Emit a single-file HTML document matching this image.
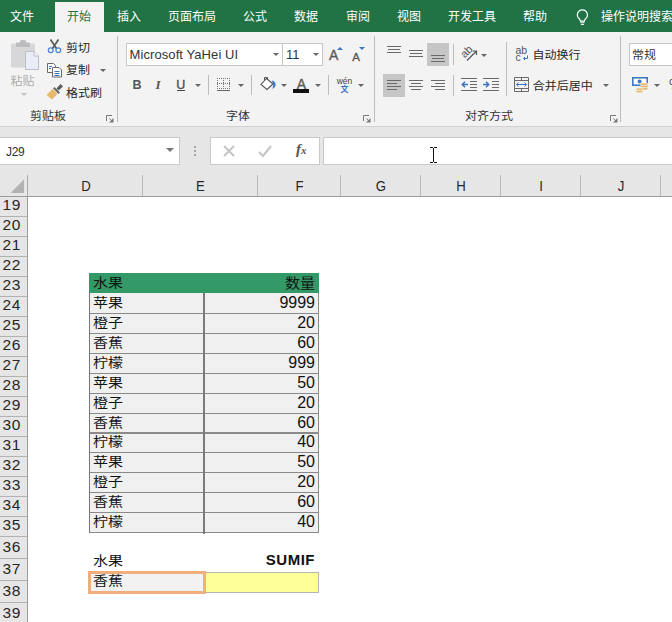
<!DOCTYPE html><html lang="zh-CN"><head><meta charset="utf-8"><title>Excel SUMIF</title><style>
*{margin:0;padding:0;box-sizing:border-box}
html,body{width:672px;height:622px;overflow:hidden;background:#fff}
body{position:relative;font-family:"Liberation Sans","Noto Sans CJK SC",sans-serif;color:#262626}
.a{position:absolute;white-space:nowrap}
.tab{position:absolute;top:0;height:34px;line-height:34px;font-size:12px;color:#fff;white-space:nowrap}
.rt{position:absolute;font-size:12px;line-height:16px;color:#262626;white-space:nowrap}
.gl{position:absolute;font-size:12px;line-height:16px;color:#444;white-space:nowrap}
.sep{position:absolute;width:1px;background:#c8c8c8}
.arr{position:absolute;width:0;height:0;border-left:3px solid transparent;border-right:3px solid transparent;border-top:3px solid #666}
.ch{position:absolute;top:176px;height:20px;line-height:20px;font-size:15px;text-align:center;color:#262626;transform:scaleX(.88)}
.chs{position:absolute;top:175px;height:21px;width:1px;background:#b8b8b8}
.rh{position:absolute;left:0;width:27px;height:20px;line-height:16.500px;font-size:15.500px;letter-spacing:0.600px;color:#262626;text-align:left;padding-left:2.500px;border-bottom:1px solid #b2b2b2}
.c1{position:absolute;left:89px;width:115px;height:20px;line-height:18px;font-size:15px;padding-left:4px;color:#111;white-space:nowrap;transform:translateY(.5px) scaleY(.87)}
.c2{position:absolute;left:205px;width:114px;height:20px;line-height:19px;font-size:16px;padding-right:4px;text-align:right;color:#111;white-space:nowrap}
</style></head><body>
<div class="a" style="left:0;top:0;width:672px;height:32px;background:#217346"></div>
<div class="a" style="left:55px;top:2px;width:49px;height:30px;background:#f3f3f3"></div>
<div class="tab" style="left:10px;color:#fff">文件</div>
<div class="tab" style="left:67px;color:#217346">开始</div>
<div class="tab" style="left:117px;color:#fff">插入</div>
<div class="tab" style="left:168px;color:#fff">页面布局</div>
<div class="tab" style="left:243px;color:#fff">公式</div>
<div class="tab" style="left:294px;color:#fff">数据</div>
<div class="tab" style="left:346px;color:#fff">审阅</div>
<div class="tab" style="left:397px;color:#fff">视图</div>
<div class="tab" style="left:448px;color:#fff">开发工具</div>
<div class="tab" style="left:523px;color:#fff">帮助</div>
<div class="tab" style="left:601px;color:#fff">操作说明搜索</div>
<svg class="a" style="left:575px;top:7px" width="16" height="20" viewBox="0 0 16 20"><path d="M7.400 2.800a5 5 0 0 0-3 9c.7.700 1 1.500 1 2.400h4c0-.9.300-1.700 1-2.400a5 5 0 0 0-3-9z" fill="none" stroke="#fff" stroke-width="1.200"/><path d="M5.400 15.800h4M5.900 17.500h3" stroke="#fff" stroke-width="1.100"/></svg>
<div class="a" style="left:0;top:32px;width:672px;height:94px;background:#f3f3f3"></div>
<div class="a" style="left:0;top:126px;width:672px;height:1px;background:#d2d2d2"></div>
<div class="a" style="left:0;top:127px;width:672px;height:69px;background:#e6e6e6"></div>
<svg class="a" style="left:10px;top:39px" width="30" height="32" viewBox="0 0 30 32"><rect x="1" y="4.500" width="24" height="24" rx="1.500" fill="#d7d7da"/><rect x="6" y="3.500" width="14" height="4.500" rx="0.800" fill="#bcbcbf"/><rect x="10" y="1" width="6" height="4" rx="1.500" fill="#bcbcbf"/><path d="M15.500 12.500h8.500l4.500 4.500v13.500h-13z" fill="#e9edf8" stroke="#bdbdc2"/><path d="M24 12.500v4.500h4.500" fill="#f6f7fb" stroke="#bdbdc2"/></svg>
<div class="rt" style="left:10.5px;top:72.5px;font-size:12px;color:#adadad;transform:scaleY(.9)">粘贴</div>
<div class="arr" style="left:21px;top:93px;border-top-color:#c2c2c2"></div>
<svg class="a" style="left:46px;top:38px" width="17" height="16" viewBox="0 0 17 16"><path d="M4.500 1.500l6 9M12.500 1.500l-6 9" stroke="#585858" stroke-width="1.700" fill="none"/><circle cx="4.700" cy="12.200" r="2.400" fill="none" stroke="#4a86c8" stroke-width="1.200"/><circle cx="12.300" cy="12.200" r="2.400" fill="none" stroke="#4a86c8" stroke-width="1.200"/></svg>
<div class="rt" style="left:66px;top:39.5px;font-size:12px;color:#262626;transform:scaleY(.9)">剪切</div>
<svg class="a" style="left:47px;top:62px" width="16" height="16" viewBox="0 0 16 16"><path d="M0.500 1.500h6l2 2v7h-8z" fill="#fff" stroke="#6a6a6a"/><path d="M5.500 5.500h6.500l2.500 2.500v7h-9z" fill="#fff" stroke="#6a6a6a"/><path d="M7.500 9.500h5M7.500 11.500h5M7.500 13.500h5" stroke="#3a75c4"/><path d="M2 4.500h3M2 6.500h2" stroke="#3a75c4"/></svg>
<div class="rt" style="left:66px;top:61.5px;font-size:12px;color:#262626;transform:scaleY(.9)">复制</div>
<div class="arr" style="left:99.5px;top:69px;border-top-color:#666"></div>
<svg class="a" style="left:46px;top:83px" width="18" height="17" viewBox="0 0 18 17"><path d="M10.500 5.500l4-4.500 2.500 2.500-4.500 4z" fill="#5a5a5a"/><path d="M8.500 4l5.500 5.500-1.500 1.500-5.500-5.500z" fill="#6a6a6a"/><path d="M6.500 6l5 5-5.500 5.500-5.500-4.500z" fill="#e8b96a"/></svg>
<div class="rt" style="left:66px;top:84.5px;font-size:12px;color:#262626;transform:scaleY(.9)">格式刷</div>
<div class="rt" style="left:30px;top:108px;font-size:12px;color:#333;transform:scaleY(.9)">剪贴板</div>
<svg class="a" style="left:106px;top:115px" width="8" height="8" viewBox="0 0 8 8"><path d="M0.500 6V0.500H6" stroke="#777" fill="none"/><path d="M7.500 3v4.500H3z" fill="#777"/><path d="M3.500 3.500l3 3" stroke="#777" fill="none"/></svg>
<div class="sep" style="left:117px;top:36px;height:86px;background:#bcbcbc"></div>
<div class="a" style="left:126px;top:43px;width:157px;height:23px;background:#fff;border:1px solid #c6c6c6"></div>
<div class="a" style="left:282px;top:43px;width:41px;height:23px;background:#fff;border:1px solid #c6c6c6"></div>
<div class="rt" style="left:129.5px;top:47px;font-size:13px;color:#333;letter-spacing:0.090px">Microsoft YaHei UI</div>
<div class="arr" style="left:272.5px;top:53px;border-top-color:#666"></div>
<div class="rt" style="left:286px;top:47px;font-size:13px;color:#333;">11</div>
<div class="arr" style="left:312.5px;top:53px;border-top-color:#666"></div>
<div class="rt" style="left:329px;top:47px;font-size:14px;color:#5a5a5a;-webkit-text-stroke:0.350px #5a5a5a">A</div>
<div class="arr" style="left:337px;top:47px;border-top:none;border-bottom:3px solid #3a75c4"></div>
<div class="rt" style="left:352.2px;top:48.5px;font-size:11.5px;color:#5a5a5a;-webkit-text-stroke:0.350px #5a5a5a">A</div>
<div class="arr" style="left:358.500px;top:47px;border-top-color:#3a75c4"></div>
<div class="rt" style="left:132.5px;top:77px;font-size:12.5px;color:#555;font-weight:bold">B</div>
<div class="rt" style="left:155.5px;top:77px;font-size:13px;color:#555;font-style:italic;font-weight:bold;font-family:'Liberation Serif',serif">I</div>
<div class="rt" style="left:176.3px;top:77px;font-size:12.5px;color:#4a4a4a;-webkit-text-stroke:0.300px #4a4a4a">U</div>
<div class="a" style="left:177px;top:90px;width:8px;height:1px;background:#4a4a4a"></div>
<div class="arr" style="left:194.5px;top:84px;border-top-color:#666"></div>
<div class="sep" style="left:208px;top:75px;height:20px;background:#bcbcbc"></div>
<svg class="a" style="left:217px;top:78px" width="14" height="14" viewBox="0 0 14 14" shape-rendering="crispEdges"><path d="M0.500 0v11M6.500 0v11M12.500 0v11M0 0.500h13M0 5.500h13M0 10.500h13" stroke="#777" stroke-dasharray="1 1" fill="none"/><path d="M0 12.500h13" stroke="#666"/></svg>
<div class="arr" style="left:237.5px;top:84px;border-top-color:#666"></div>
<div class="sep" style="left:251px;top:75px;height:20px;background:#bcbcbc"></div>
<svg class="a" style="left:259px;top:76px" width="18" height="16" viewBox="0 0 18 16"><path d="M7.500 2.500L14 8 8 13.500 2 8.500z" fill="#fff" stroke="#555" stroke-width="1.100"/><path d="M5.500 4.500v-3h3v2.500" fill="none" stroke="#555" stroke-width="1"/><path d="M12.600 4.500C15.200 5 16.900 6.800 16.600 8.900 16.400 10.500 15.200 12 13.300 12.800 13.900 11.200 14.300 9.600 14.300 8.200z" fill="#3a75c4"/></svg>
<div class="arr" style="left:281px;top:84px;border-top-color:#666"></div>
<div class="rt" style="left:296.8px;top:76px;font-size:14px;color:#5a5a5a;-webkit-text-stroke:0.350px #5a5a5a">A</div>
<div class="a" style="left:293px;top:89px;width:16px;height:4px;background:#111"></div>
<div class="arr" style="left:314.5px;top:84px;border-top-color:#666"></div>
<div class="sep" style="left:328px;top:75px;height:20px;background:#bcbcbc"></div>
<div class="rt" style="left:336px;top:76px;font-size:8.500px;line-height:10px;color:#444;width:17px;text-align:center">wén</div>
<div class="rt" style="left:336px;top:85px;font-size:8px;line-height:10px;color:#3a75c4;width:17px;text-align:center;font-weight:bold">文</div>
<div class="arr" style="left:357.5px;top:84px;border-top-color:#666"></div>
<div class="rt" style="left:226px;top:108px;font-size:12px;color:#333;transform:scaleY(.9)">字体</div>
<svg class="a" style="left:363px;top:115px" width="8" height="8" viewBox="0 0 8 8"><path d="M0.500 6V0.500H6" stroke="#777" fill="none"/><path d="M7.500 3v4.500H3z" fill="#777"/><path d="M3.500 3.500l3 3" stroke="#777" fill="none"/></svg>
<div class="sep" style="left:374px;top:36px;height:86px;background:#bcbcbc"></div>
<div class="a" style="left:387px;top:46px;width:14px;height:1px;background:#6a6a6a"></div>
<div class="a" style="left:388px;top:49px;width:12px;height:1px;background:#6a6a6a"></div>
<div class="a" style="left:387px;top:52px;width:14px;height:1px;background:#6a6a6a"></div>
<div class="a" style="left:409px;top:50px;width:14px;height:1px;background:#6a6a6a"></div>
<div class="a" style="left:410px;top:53px;width:12px;height:1px;background:#6a6a6a"></div>
<div class="a" style="left:409px;top:56px;width:14px;height:1px;background:#6a6a6a"></div>
<div class="a" style="left:427px;top:43px;width:22px;height:23px;background:#c6c6c6"></div>
<div class="a" style="left:431px;top:55px;width:14px;height:1px;background:#6a6a6a"></div>
<div class="a" style="left:432px;top:58px;width:12px;height:1px;background:#6a6a6a"></div>
<div class="a" style="left:431px;top:61px;width:14px;height:1px;background:#6a6a6a"></div>
<div class="sep" style="left:453px;top:44px;height:21px;background:#bcbcbc"></div>
<svg class="a" style="left:458px;top:43px" width="22" height="22" viewBox="0 0 22 22"><text x="0" y="0" font-family="Liberation Sans, sans-serif" font-size="11" fill="#555" transform="translate(6.700 15.500) rotate(-45)">ab</text><path d="M9 17.500L18.500 8M14.500 8h4v4" stroke="#555" stroke-width="1.200" fill="none"/></svg>
<div class="arr" style="left:481px;top:54px;border-top-color:#666"></div>
<div class="sep" style="left:506px;top:42px;height:54px;background:#bcbcbc"></div>
<svg class="a" style="left:515px;top:45px" width="16" height="18" viewBox="0 0 16 18"><text x="0.500" y="8.500" font-family="Liberation Sans, sans-serif" font-size="10.500" fill="#555">ab</text><text x="0.500" y="15.500" font-family="Liberation Sans, sans-serif" font-size="10.500" fill="#555">c</text><path d="M12.500 10.500v3h-4M10 12l-1.500 1.500 1.500 1.500" stroke="#3a75c4" fill="none"/></svg>
<div class="rt" style="left:532.5px;top:47px;font-size:12px;color:#262626;transform:scaleY(.9)">自动换行</div>
<div class="a" style="left:383px;top:74px;width:22px;height:23px;background:#c6c6c6"></div>
<div class="a" style="left:387px;top:80px;width:14px;height:1px;background:#6a6a6a"></div>
<div class="a" style="left:387px;top:83px;width:10px;height:1px;background:#6a6a6a"></div>
<div class="a" style="left:387px;top:86px;width:14px;height:1px;background:#6a6a6a"></div>
<div class="a" style="left:387px;top:89px;width:10px;height:1px;background:#6a6a6a"></div>
<div class="a" style="left:409px;top:80px;width:14px;height:1px;background:#6a6a6a"></div>
<div class="a" style="left:411px;top:83px;width:10px;height:1px;background:#6a6a6a"></div>
<div class="a" style="left:409px;top:86px;width:14px;height:1px;background:#6a6a6a"></div>
<div class="a" style="left:411px;top:89px;width:10px;height:1px;background:#6a6a6a"></div>
<div class="a" style="left:431px;top:80px;width:14px;height:1px;background:#6a6a6a"></div>
<div class="a" style="left:435px;top:83px;width:10px;height:1px;background:#6a6a6a"></div>
<div class="a" style="left:431px;top:86px;width:14px;height:1px;background:#6a6a6a"></div>
<div class="a" style="left:435px;top:89px;width:10px;height:1px;background:#6a6a6a"></div>
<div class="sep" style="left:453px;top:75px;height:21px;background:#bcbcbc"></div>
<svg class="a" style="left:461px;top:78px" width="16" height="13" viewBox="0 0 16 13"><path d="M0 0.500h16M9 3.500h7M9 6.500h7M9 9.500h7M0 12.500h16" stroke="#6a6a6a"/><path d="M7 6.500H1.500M4 3.800l-2.700 2.700 2.700 2.700" stroke="#3a75c4" stroke-width="1.500" fill="none"/></svg>
<svg class="a" style="left:483px;top:78px" width="16" height="13" viewBox="0 0 16 13"><path d="M0 0.500h16M9 3.500h7M9 6.500h7M9 9.500h7M0 12.500h16" stroke="#6a6a6a"/><path d="M0 6.500h5.500M3 3.800l2.700 2.700-2.700 2.700" stroke="#3a75c4" stroke-width="1.500" fill="none"/></svg>
<svg class="a" style="left:514px;top:77px" width="16" height="15" viewBox="0 0 16 15"><path d="M0.500 0.500h14v14h-14zM0.500 3.500h14M0.500 11.500h14M7.500 0.500v3M7.500 11.500v3" stroke="#6a6a6a" fill="none"/><path d="M2.500 7.500h10M4.500 5.500l-2 2 2 2M10.500 5.500l2 2-2 2" stroke="#3a75c4" fill="none"/></svg>
<div class="rt" style="left:532.8px;top:77.5px;font-size:12px;color:#262626;transform:scaleY(.9)">合并后居中</div>
<div class="arr" style="left:603px;top:84px;border-top-color:#666"></div>
<div class="rt" style="left:465px;top:108px;font-size:12px;color:#333;transform:scaleY(.9)">对齐方式</div>
<svg class="a" style="left:610px;top:115px" width="8" height="8" viewBox="0 0 8 8"><path d="M0.500 6V0.500H6" stroke="#777" fill="none"/><path d="M7.500 3v4.500H3z" fill="#777"/><path d="M3.500 3.500l3 3" stroke="#777" fill="none"/></svg>
<div class="sep" style="left:620px;top:36px;height:86px;background:#bcbcbc"></div>
<div class="a" style="left:629px;top:43px;width:60px;height:23px;background:#fff;border:1px solid #c6c6c6"></div>
<div class="rt" style="left:632px;top:47px;font-size:12px;color:#333;transform:scaleY(.9)">常规</div>
<svg class="a" style="left:632px;top:77px" width="17" height="17" viewBox="0 0 17 17"><rect x="0.800" y="0.800" width="14.400" height="7.400" fill="#fff" stroke="#3f78c4" stroke-width="1.600"/><circle cx="7.600" cy="4.500" r="2" fill="#3f78c4"/><g fill="#e6b768" stroke="#f3f3f3" stroke-width=".7"><rect x="8.500" y="6" width="7.500" height="2.400" rx="1.200"/><rect x="8.500" y="8.300" width="7.500" height="2.400" rx="1.200"/><rect x="8.500" y="10.600" width="7.500" height="2.400" rx="1.200"/><rect x="4" y="11" width="7" height="2.400" rx="1.200"/><rect x="4" y="13.300" width="7" height="2.400" rx="1.200"/></g></svg>
<div class="arr" style="left:653.5px;top:84px;border-top-color:#666"></div>
<div class="rt" style="left:669px;top:76px;font-size:14px;color:#555;">%</div>
<div class="a" style="left:-1px;top:137px;width:181px;height:28px;background:#fff;border:1px solid #c9c9c9"></div>
<div class="a" style="left:6px;top:144px;font-size:12px;line-height:16px;letter-spacing:-0.300px;color:#333">J29</div>
<div class="arr" style="left:166px;top:148px;border-left-width:4px;border-right-width:4px;border-top-width:4px;border-top-color:#777"></div>
<div class="a" style="left:194px;top:146px;width:2px;height:2px;background:#a6a6a6"></div>
<div class="a" style="left:194px;top:150px;width:2px;height:2px;background:#a6a6a6"></div>
<div class="a" style="left:194px;top:154px;width:2px;height:2px;background:#a6a6a6"></div>
<div class="a" style="left:210px;top:137px;width:110px;height:28px;background:#fff;border:1px solid #c9c9c9"></div>
<div class="a" style="left:323px;top:137px;width:360px;height:28px;background:#fff;border:1px solid #c9c9c9"></div>
<svg class="a" style="left:222px;top:144px" width="14" height="14" viewBox="0 0 14 14"><path d="M2 2l10 10M12 2L2 12" stroke="#c4c4c4" stroke-width="1.900" fill="none"/></svg>
<svg class="a" style="left:257px;top:144px" width="16" height="14" viewBox="0 0 16 14"><path d="M2 8l4 4L14 2" stroke="#c4c4c4" stroke-width="2.100" fill="none"/></svg>
<div class="a" style="left:296px;top:140px;font-family:'Liberation Serif',serif;font-style:italic;font-weight:bold;font-size:15px;line-height:18px;color:#555">f<span style="font-size:11px">x</span></div>
<svg class="a" style="left:430px;top:147px" width="7" height="16" viewBox="0 0 7 16" shape-rendering="crispEdges"><path d="M0 0h3v1h-3zM4 0h3v1h-3zM3 1h1v14h-1zM0 15h3v1h-3zM4 15h3v1h-3z" fill="#111"/></svg>
<svg class="a" style="left:0;top:175px" width="28" height="22" viewBox="0 0 28 22"><path d="M24 4.500v13.500H10.500z" fill="#b2b2b2"/><path d="M27.500 0v22" stroke="#ababab"/></svg>
<div class="ch" style="left:29px;width:114px">D</div>
<div class="chs" style="left:142px"></div>
<div class="ch" style="left:143px;width:115px">E</div>
<div class="chs" style="left:257px"></div>
<div class="ch" style="left:258px;width:83px">F</div>
<div class="chs" style="left:340px"></div>
<div class="ch" style="left:341px;width:80px">G</div>
<div class="chs" style="left:420px"></div>
<div class="ch" style="left:421px;width:80px">H</div>
<div class="chs" style="left:500px"></div>
<div class="ch" style="left:501px;width:80px">I</div>
<div class="chs" style="left:580px"></div>
<div class="ch" style="left:581px;width:80px">J</div>
<div class="chs" style="left:660px"></div>
<div class="a" style="left:0;top:196px;width:672px;height:1px;background:#9b9b9b"></div>
<div class="a" style="left:0;top:197px;width:28px;height:425px;background:#e6e6e6;border-right:1px solid #9b9b9b"></div>
<div class="rh" style="top:197px;height:20px;line-height:16.5px">19</div>
<div class="rh" style="top:217px;height:20px;line-height:16.5px">20</div>
<div class="rh" style="top:237px;height:20px;line-height:16.5px">21</div>
<div class="rh" style="top:257px;height:20px;line-height:16.5px">22</div>
<div class="rh" style="top:277px;height:20px;line-height:16.5px">23</div>
<div class="rh" style="top:297px;height:20px;line-height:16.5px">24</div>
<div class="rh" style="top:317px;height:20px;line-height:16.5px">25</div>
<div class="rh" style="top:337px;height:20px;line-height:16.5px">26</div>
<div class="rh" style="top:357px;height:20px;line-height:16.5px">27</div>
<div class="rh" style="top:377px;height:20px;line-height:16.5px">28</div>
<div class="rh" style="top:397px;height:20px;line-height:16.5px">29</div>
<div class="rh" style="top:417px;height:20px;line-height:16.5px">30</div>
<div class="rh" style="top:437px;height:20px;line-height:16.5px">31</div>
<div class="rh" style="top:457px;height:20px;line-height:16.5px">32</div>
<div class="rh" style="top:477px;height:20px;line-height:16.5px">33</div>
<div class="rh" style="top:497px;height:20px;line-height:16.5px">34</div>
<div class="rh" style="top:517px;height:20px;line-height:16.5px">35</div>
<div class="rh" style="top:537px;height:22px;line-height:20.5px">36</div>
<div class="rh" style="top:559px;height:22px;line-height:20.5px">37</div>
<div class="rh" style="top:581px;height:22px;line-height:20.5px">38</div>
<div class="rh" style="top:603px;height:22px;line-height:20.5px">39</div>
<div class="rh" style="top:625px;height:22px;line-height:20.5px">40</div>
<div class="a" style="left:89px;top:273px;width:230px;height:20px;background:#339966"></div>
<div class="c1" style="top:273px;line-height:20px;transform:scaleY(.87)">水果</div>
<div class="c2" style="top:273px;line-height:19px;font-size:15px;padding-right:4px;transform:scaleY(.9)">数量</div>
<div class="a" style="left:89px;top:293px;width:230px;height:240px;background:#f0f0f0"></div>
<div class="c1" style="top:293px">苹果</div><div class="c2" style="top:293px">9999</div>
<div class="a" style="left:89px;top:313px;width:230px;height:1px;background:#8a8a8a"></div>
<div class="c1" style="top:313px">橙子</div><div class="c2" style="top:313px">20</div>
<div class="a" style="left:89px;top:333px;width:230px;height:1px;background:#8a8a8a"></div>
<div class="c1" style="top:333px">香蕉</div><div class="c2" style="top:333px">60</div>
<div class="a" style="left:89px;top:353px;width:230px;height:1px;background:#8a8a8a"></div>
<div class="c1" style="top:353px">柠檬</div><div class="c2" style="top:353px">999</div>
<div class="a" style="left:89px;top:373px;width:230px;height:1px;background:#8a8a8a"></div>
<div class="c1" style="top:373px">苹果</div><div class="c2" style="top:373px">50</div>
<div class="a" style="left:89px;top:393px;width:230px;height:1px;background:#8a8a8a"></div>
<div class="c1" style="top:393px">橙子</div><div class="c2" style="top:393px">20</div>
<div class="a" style="left:89px;top:413px;width:230px;height:1px;background:#8a8a8a"></div>
<div class="c1" style="top:413px">香蕉</div><div class="c2" style="top:413px">60</div>
<div class="a" style="left:89px;top:432px;width:230px;height:2px;background:#8a8a8a"></div>
<div class="c1" style="top:432px">柠檬</div><div class="c2" style="top:432px">40</div>
<div class="a" style="left:89px;top:452px;width:230px;height:1px;background:#8a8a8a"></div>
<div class="c1" style="top:452px">苹果</div><div class="c2" style="top:452px">50</div>
<div class="a" style="left:89px;top:472px;width:230px;height:1px;background:#8a8a8a"></div>
<div class="c1" style="top:472px">橙子</div><div class="c2" style="top:472px">20</div>
<div class="a" style="left:89px;top:492px;width:230px;height:1px;background:#8a8a8a"></div>
<div class="c1" style="top:492px">香蕉</div><div class="c2" style="top:492px">60</div>
<div class="a" style="left:89px;top:512px;width:230px;height:1px;background:#8a8a8a"></div>
<div class="c1" style="top:512px">柠檬</div><div class="c2" style="top:512px">40</div>
<div class="a" style="left:89px;top:532px;width:230px;height:1px;background:#8a8a8a"></div>
<div class="a" style="left:89px;top:293px;width:1px;height:240px;background:#777"></div>
<div class="a" style="left:203px;top:293px;width:2px;height:241px;background:#7a7a7a"></div>
<div class="a" style="left:318px;top:293px;width:1px;height:240px;background:#8a8a8a"></div>
<div class="c1" style="top:550px;line-height:20px">水果</div>
<div class="c2" style="top:551px;line-height:18px;font-weight:bold;font-size:15px;letter-spacing:0.500px">SUMIF</div>
<div class="a" style="left:88px;top:571px;width:118px;height:23px;background:#f2f2f2;border:3px solid #f3ae7e"></div>
<div class="c1" style="top:570px;line-height:20px">香蕉</div>
<div class="a" style="left:206px;top:572px;width:113px;height:21px;background:#ffff99;border:1px solid #b4b4b0;border-left:none"></div>
</body></html>
